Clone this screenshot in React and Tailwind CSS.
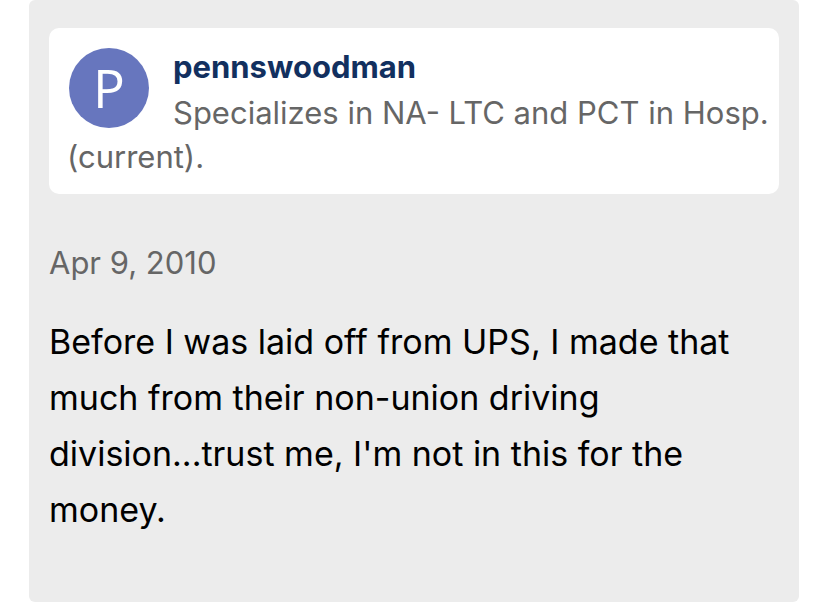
import React from 'react';

const post = {
  author: 'pennswoodman',
  initial: 'P',
  about: 'Specializes in NA- LTC and PCT in Hosp. (current).',
  date: 'Apr 9, 2010',
  dateTime: '2010-04-09',
  body: "Before I was laid off from UPS, I made that much from their non-union driving division...trust me, I'm not in this for the money."
};

const AuthorCard = ({ author, initial, about }) => (
  <header className="flow-root rounded-[10px] bg-white pt-[17px] pr-2 pb-[15px] pl-[18px]">
    <div className="float-left mt-[3px] mr-6 ml-[2px] flex size-20 items-center justify-center rounded-full bg-[#6776be] pb-[2px] font-['Open_Sans',sans-serif] text-[53px] leading-none text-white">
      {initial}
    </div>
    <a href="#author" className="mb-[2px] block text-[31px] leading-[44px] font-bold text-[#12305f]">
      {author}
    </a>
    <p className="text-[31px] leading-[44px] text-[#666666]">{about}</p>
  </header>
);

const App = () => {
  return (
    <main className="px-[29px] font-['Inter',sans-serif]">
      <article className="min-h-screen rounded-md bg-[#ececec] px-5 pt-7">
        <AuthorCard author={post.author} initial={post.initial} about={post.about} />
        <time
          dateTime={post.dateTime}
          className="mt-[47px] block text-[31px] leading-[44px] text-[#666666]"
        >
          {post.date}
        </time>
        <p className="mt-[29px] text-[34px] leading-[56px] text-black">{post.body}</p>
      </article>
    </main>
  );
};

export default App;
